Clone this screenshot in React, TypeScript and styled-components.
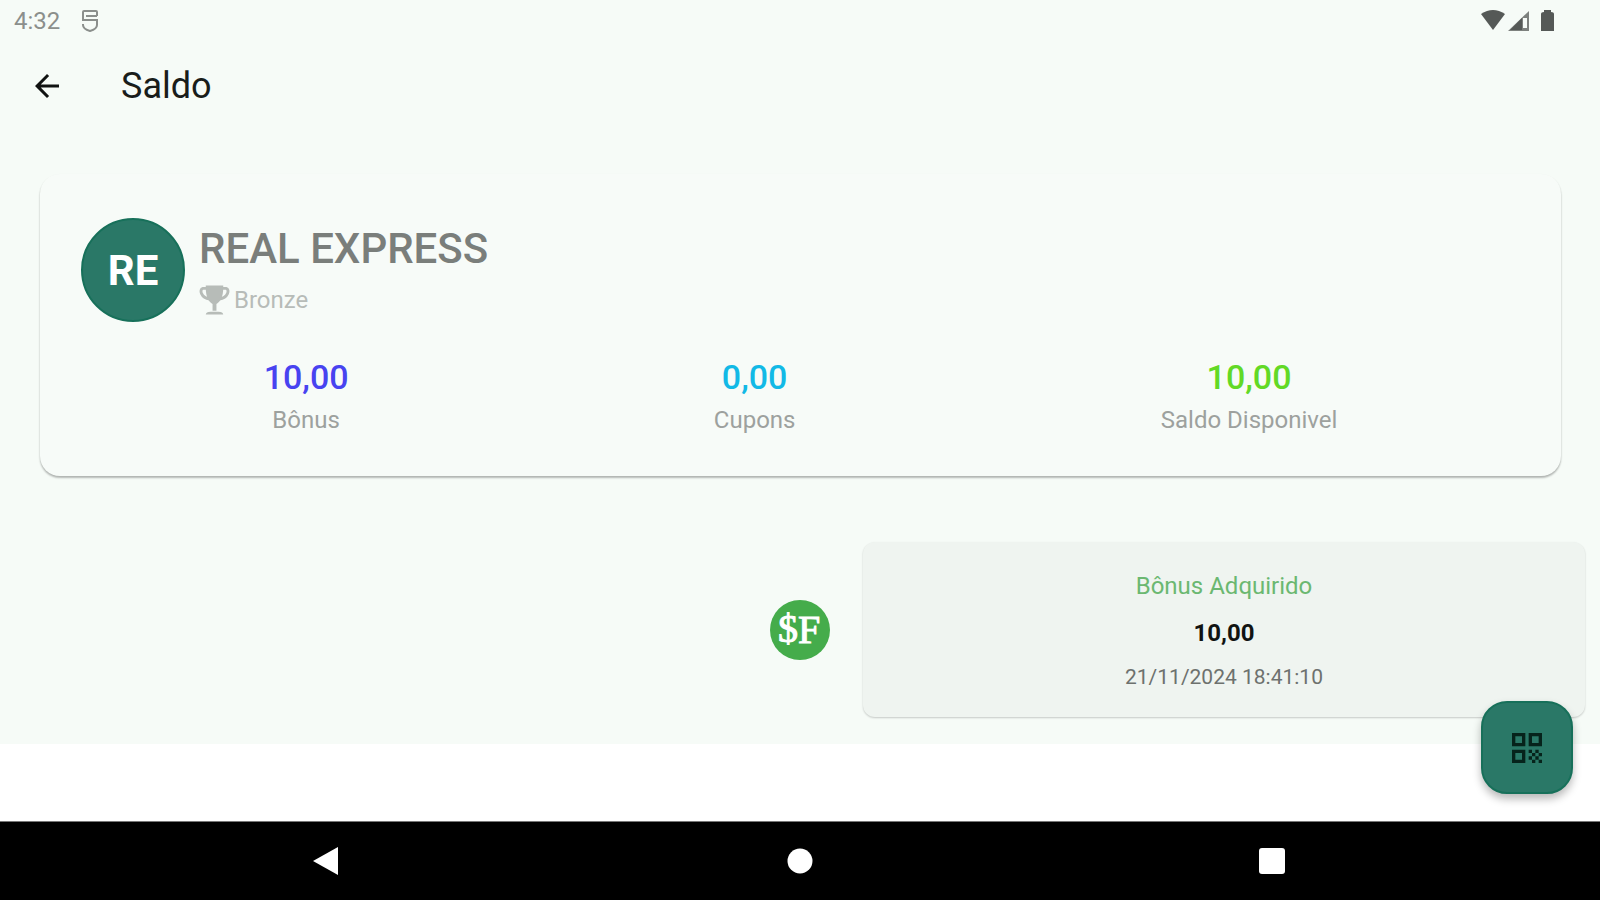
import React from "react";
import styled, { createGlobalStyle } from "styled-components";
import { MdArrowBack, MdQrCode } from "react-icons/md";

const GlobalStyle = createGlobalStyle`
  *, *::before, *::after { box-sizing: border-box; }
  body {
    margin: 0;
    background: #ffffff;
    color: #191d1b;
    font-family: Roboto, "Liberation Sans", sans-serif;
  }
  button { border: 0; padding: 0; background: none; color: inherit; font: inherit; cursor: pointer; }
  h1, h2, p, ul, dl, dd { margin: 0; padding: 0; }
  svg { display: block; }
`;

const Screen = styled.div`
  display: flex;
  flex-direction: column;
  min-height: 100vh;
`;

const Content = styled.div`
  background: #f6fbf7;
  padding-bottom: 27px;
`;

const StatusBar = styled.div`
  display: flex;
  align-items: center;
  justify-content: space-between;
  height: 42px;
  padding: 0 43px 0 14px;
  color: #8b8f8c;
  font-size: 24px;
  line-height: 28px;
`;

const StatusGroup = styled.div`
  display: flex;
  align-items: center;
  gap: 21px;
`;

const AppBar = styled.header`
  display: flex;
  align-items: center;
  gap: 56px;
  height: 88px;
  padding: 0 29px;
`;

const BackButton = styled.button`
  color: #101211;
  font-size: 36px;
`;

const Title = styled.h1`
  font-size: 36px;
  line-height: 44px;
  font-weight: 400;
`;

const Main = styled.main`
  display: flex;
  flex-direction: column;
  gap: 66px;
  padding-top: 44px;
`;

const BalanceCard = styled.section`
  margin: 0 39px 0 40px;
  padding: 40px 41px 34px;
  border-radius: 20px;
  background: #f7fbf8;
  box-shadow: 0 2px 2px rgba(0, 0, 0, 0.24), 0 1px 2px rgba(0, 0, 0, 0.08);
`;

const Profile = styled.div`
  display: flex;
  align-items: center;
  gap: 14px;
`;

const Avatar = styled.div`
  display: grid;
  place-items: center;
  width: 104px;
  height: 104px;
  border: 2px solid #17705a;
  border-radius: 50%;
  background: #2a7867;
  color: #ffffff;
  font-size: 42px;
  font-weight: 700;
`;

const Identity = styled.div`
  padding-top: 10px;
`;

const CompanyName = styled.h2`
  color: #7a7e7b;
  font-size: 42px;
  line-height: 50px;
  font-weight: 500;
`;

const Tier = styled.p`
  display: flex;
  align-items: center;
  gap: 4px;
  height: 52px;
  color: #b7bcb8;
  font-size: 24px;
`;

const Totals = styled.dl`
  display: flex;
  justify-content: space-around;
  padding-top: 30px;
`;

const Total = styled.div`
  display: flex;
  flex-direction: column-reverse;
  align-items: center;
`;

const TotalLabel = styled.dt`
  color: #9da19e;
  font-size: 24px;
  line-height: 44px;
`;

const TotalValue = styled.dd<{ $color: string }>`
  color: ${(p) => p.$color};
  font-size: 34px;
  line-height: 42px;
  font-weight: 500;
`;

const Timeline = styled.ul`
  list-style: none;
`;

const TimelineRow = styled.li`
  display: grid;
  grid-template-columns: 1fr 60px 1fr;
  align-items: center;
`;

const Entry = styled.article`
  grid-column: 3;
  display: flex;
  flex-direction: column;
  align-items: center;
  margin: 0 15px 0 33px;
  padding: 20px 16px 19px;
  border-radius: 12px;
  background: #eff4f0;
  box-shadow: 0 1px 2px rgba(0, 0, 0, 0.2);
`;

const Marker = styled.div`
  grid-column: 2;
  grid-row: 1;
`;

const EntryTitle = styled.p`
  color: #6bb871;
  font-size: 24px;
  line-height: 48px;
`;

const EntryAmount = styled.p`
  color: #111312;
  font-size: 24px;
  line-height: 46px;
  font-weight: 700;
`;

const EntryDate = styled.time`
  color: #6d716e;
  font-size: 21px;
  line-height: 42px;
`;

const Spacer = styled.div`
  flex: 1;
`;

const ScanButton = styled.button`
  position: fixed;
  right: 27px;
  bottom: 106px;
  display: grid;
  place-items: center;
  width: 92px;
  height: 93px;
  border: 2px solid #17705a;
  border-radius: 26px;
  background: #2a7867;
  color: #06231b;
  font-size: 40px;
  box-shadow: 0 5px 8px rgba(0, 0, 0, 0.28);
`;

const NavBar = styled.nav`
  display: grid;
  grid-template-columns: repeat(3, 1fr);
  align-items: center;
  justify-items: center;
  height: 79px;
  padding: 0 90px;
  border-top: 1px solid #777777;
  background: #000000;
`;

const NavButton = styled.button`
  color: #ffffff;
`;

const totals = [
  { label: "Bônus", value: "10,00", color: "#4843f0" },
  { label: "Cupons", value: "0,00", color: "#12b9e6" },
  { label: "Saldo Disponivel", value: "10,00", color: "#62d926" },
];

function NotificationIcon() {
  return (
    <svg width="18" height="24" viewBox="0 0 18 24" fill="none" stroke="currentColor" strokeWidth="2" aria-hidden="true">
      <path d="M16 7V3Q16 2 15 2H3Q2 2 2 3V11H16V16Q16 20 9 22Q2 20 2 16V15M5 7H16" />
    </svg>
  );
}

function SignalIcons() {
  return (
    <svg width="76" height="24" viewBox="0 0 76 24" fill="#555957" aria-hidden="true">
      <path d="M0 5Q12-3 24 5L12 21Z" />
      <path d="M27 22L48 2V22Z" fill="#7d817e" />
      <path d="M29 21L41 9V21Z" />
      <path d="M42 9H46V19H42Z" fill="#f6fbf7" />
      <path d="M60 5Q60 3 63 3V1H70V3Q73 3 73 5V22H60Z" />
    </svg>
  );
}

function TrophyIcon() {
  return (
    <svg width="31" height="32" viewBox="0 0 32 32" fill="currentColor" aria-hidden="true">
      <path d="M7 1H25V4C25 12 22 18 18 20V27H14V20C10 18 7 12 7 4Z" />
      <path d="M8 4H4C0 5 2 14 11 15M24 4H28C32 5 30 14 21 15" fill="none" stroke="currentColor" strokeWidth="3" />
      <path d="M7 31Q7 28 12 28H20Q25 28 25 31Z" />
    </svg>
  );
}

function CoinIcon() {
  return (
    <svg width="60" height="60" viewBox="0 0 60 60" role="img" aria-label="Bônus">
      <circle cx="30" cy="30" r="30" fill="#45ac4b" />
      <g fill="#ffffff" stroke="#ffffff" strokeWidth="1" fontFamily="Liberation Serif, serif" fontSize="40">
        <text x="8" y="42">$</text>
        <text x="28" y="43">F</text>
      </g>
    </svg>
  );
}

export default function App() {
  return (
    <Screen>
      <GlobalStyle />
      <Content>
        <StatusBar>
          <StatusGroup>
            <span>4:32</span>
            <NotificationIcon />
          </StatusGroup>
          <SignalIcons />
        </StatusBar>
        <AppBar>
          <BackButton aria-label="Voltar">
            <MdArrowBack />
          </BackButton>
          <Title>Saldo</Title>
        </AppBar>
        <Main>
          <BalanceCard>
            <Profile>
              <Avatar>RE</Avatar>
              <Identity>
                <CompanyName>REAL EXPRESS</CompanyName>
                <Tier>
                  <TrophyIcon />
                  Bronze
                </Tier>
              </Identity>
            </Profile>
            <Totals>
              {totals.map((t) => (
                <Total key={t.label}>
                  <TotalLabel>{t.label}</TotalLabel>
                  <TotalValue $color={t.color}>{t.value}</TotalValue>
                </Total>
              ))}
            </Totals>
          </BalanceCard>
          <Timeline>
            <TimelineRow>
              <Marker>
                <CoinIcon />
              </Marker>
              <Entry>
                <EntryTitle>Bônus Adquirido</EntryTitle>
                <EntryAmount>10,00</EntryAmount>
                <EntryDate dateTime="2024-11-21T18:41:10">21/11/2024 18:41:10</EntryDate>
              </Entry>
            </TimelineRow>
          </Timeline>
        </Main>
      </Content>
      <Spacer />
      <ScanButton aria-label="Ler QR Code">
        <MdQrCode />
      </ScanButton>
      <NavBar aria-label="Sistema">
        <NavButton aria-label="Voltar">
          <svg width="30" height="30" viewBox="0 0 30 30" fill="currentColor">
            <path d="M1 15L26 1V29Z" />
          </svg>
        </NavButton>
        <NavButton aria-label="Início">
          <svg width="26" height="26" viewBox="0 0 26 26" fill="currentColor">
            <circle cx="13" cy="13" r="12.5" />
          </svg>
        </NavButton>
        <NavButton aria-label="Recentes">
          <svg width="28" height="28" viewBox="0 0 28 28" fill="currentColor">
            <rect x="0" y="1" width="26" height="26" rx="3" />
          </svg>
        </NavButton>
      </NavBar>
    </Screen>
  );
}
